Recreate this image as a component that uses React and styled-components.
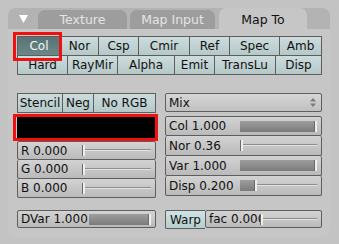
import React from 'react';
import styled, { createGlobalStyle } from 'styled-components';

const GlobalStyle = createGlobalStyle`
  body {
    margin: 0;
    background: #c3c3c3;
    font-family: "DejaVu Sans", "Liberation Sans", sans-serif;
  }
  * { box-sizing: border-box; }
`;

const Panel = styled.div`
  margin: 8px 0 0 8px;
  width: 322px;
  height: 229px;
  background: #c6c6c6;
  border-radius: 8px;
`;

const Header = styled.div`
  display: flex;
  align-items: flex-end;
  height: 21px;
  background: #b3b3b3;
  border-radius: 8px 8px 0 0;
`;

const Toggle = styled.div`
  align-self: stretch;
  width: 30px;
  display: flex;
  align-items: center;
  justify-content: center;
  padding-top: 1px;
`;

const Tab = styled.div`
  width: ${p => p.$w}px;
  height: ${p => (p.$active ? 21 : 19)}px;
  margin-right: ${p => p.$mr || 0}px;
  border-radius: 7px 7px 0 0;
  background: ${p => (p.$active ? '#c6c6c6' : '#9d9d9d')};
  color: ${p => (p.$active ? '#111' : '#e4e4e4')};
  font-size: 12.5px;
  display: flex;
  align-items: center;
  justify-content: center;
  padding-top: ${p => (p.$active ? 1 : 0)}px;
`;

const Body = styled.div`
  padding: 7px 0 0 9px;
`;

const Block = styled.div`
  display: flex;
  flex-direction: column;
  border-top: 1px solid #5e5e5e;
  border-left: 1px solid #5e5e5e;
  width: ${p => p.$w}px;
`;

const Row = styled.div`
  display: flex;
`;

const Btn = styled.div`
  position: relative;
  width: ${p => p.$w}px;
  height: 19px;
  border-right: 1px solid #5e5e5e;
  border-bottom: 1px solid #5e5e5e;
  background: ${p =>
    p.$on
      ? 'linear-gradient(#587373, #6b8787)'
      : 'linear-gradient(#cddcdc, #b5c8c8)'};
  color: ${p => (p.$on ? '#f4f4f4' : '#111')};
  font-size: 12px;
  display: flex;
  align-items: center;
  justify-content: center;
  white-space: nowrap;

  ${p =>
    p.$mark &&
    `&::after {
      content: '';
      position: absolute;
      top: -5px;
      left: -5px;
      right: -2px;
      bottom: -6px;
      border: 3px solid #f01010;
      z-index: 2;
    }`}
`;

const Columns = styled.div`
  display: grid;
  grid-template-columns: 139px 157px;
  column-gap: 9px;
  margin-top: ${p => p.$mt}px;
`;

const Col = styled.div`
  display: flex;
  flex-direction: column;
  margin-top: ${p => p.$mt || 0}px;
`;

const Swatch = styled.div`
  position: relative;
  height: 21px;
  margin: 4px 1px 3px 0;
  background: #000;

  &::after {
    content: '';
    position: absolute;
    top: -3px;
    left: -4px;
    right: -3px;
    bottom: -3px;
    border: 3px solid #f01010;
    z-index: 2;
  }
`;

const SliderBox = styled.div`
  display: flex;
  align-items: center;
  flex: ${p => (p.$grow ? 1 : 'none')};
  min-width: 0;
  height: ${p => p.$h || 19}px;
  border: 1px solid #5e5e5e;
  border-radius: 2px;
  background: linear-gradient(#d3d3d3, #bababa);
  padding-left: 3px;
  font-size: 12px;
  color: #111;

  & + & { border-top: none; }
`;

const SliderLabel = styled.div`
  flex: 0 0 ${p => p.$lw || 47}%;
  white-space: nowrap;
  overflow: hidden;
`;

const Track = styled.div`
  flex: 1;
  height: 11px;
  margin-right: 4px;
  display: flex;
  background: linear-gradient(
    to bottom,
    transparent 4px,
    #8e8e8e 4px,
    #8e8e8e 5px,
    #e2e2e2 5px,
    #e2e2e2 6px,
    transparent 6px
  );
`;

const Fill = styled.div`
  background: linear-gradient(#9d9d9d, #7b7b7b);
`;

const Handle = styled.div`
  flex: none;
  width: 3px;
  margin-left: -2px;
  border-left: 1px solid #6a6a6a;
  background: #eeeeee;
`;

const Select = styled.div`
  display: flex;
  align-items: center;
  justify-content: space-between;
  height: 19px;
  border: 1px solid #5e5e5e;
  border-radius: 2px;
  background: linear-gradient(#d6d6d6, #c0c0c0);
  padding: 0 5px 0 3px;
  font-size: 12px;
  color: #111;
`;

const BottomRow = styled.div`
  display: flex;
`;

const Warp = styled(Btn)`
  flex: none;
  border: 1px solid #5e5e5e;
  border-right: none;
  border-radius: 2px 0 0 2px;
  background: linear-gradient(#cfe3e3, #b6cece);
`;

function Slider({ label, value, h, grow, lw }) {
  return (
    <SliderBox $h={h} $grow={grow}>
      <SliderLabel $lw={lw}>{label}</SliderLabel>
      <Track>
        <Fill style={{ width: `${value * 100}%` }} />
        <Handle />
      </Track>
    </SliderBox>
  );
}

const row1 = [
  ['Col', 43], ['Nor', 38], ['Csp', 40], ['Cmir', 51], ['Ref', 40], ['Spec', 50], ['Amb', 42],
];
const row2 = [
  ['Hard', 50], ['RayMir', 50], ['Alpha', 57], ['Emit', 40], ['TransLu', 61], ['Disp', 46],
];

export default function App() {
  return (
    <>
      <GlobalStyle />
      <Panel>
        <Header>
          <Toggle>
            <svg width="9" height="8" viewBox="0 0 9 8">
              <polygon points="0,0 9,0 4.5,8" fill="#ffffff" />
            </svg>
          </Toggle>
          <Tab $w={89} $mr={3}>Texture</Tab>
          <Tab $w={85} $mr={4}>Map Input</Tab>
          <Tab $w={88} $active>Map To</Tab>
        </Header>
        <Body>
          <Block $w={305}>
            <Row>
              {row1.map(([t, w], i) => (
                <Btn key={t} $w={w} $on={i === 0} $mark={i === 0}>{t}</Btn>
              ))}
            </Row>
            <Row>
              {row2.map(([t, w]) => (
                <Btn key={t} $w={w}>{t}</Btn>
              ))}
            </Row>
          </Block>

          <Columns $mt={18}>
            <Col>
              <Block $w={139}>
                <Row>
                  <Btn $w={45}>Stencil</Btn>
                  <Btn $w={31}>Neg</Btn>
                  <Btn $w={62}>No RGB</Btn>
                </Row>
              </Block>
              <Swatch />
              <Col>
                <Slider label="R 0.000" value={0} />
                <Slider label="G 0.000" value={0} />
                <Slider label="B 0.000" value={0} />
              </Col>
            </Col>
            <Col>
              <Select>
                <span>Mix</span>
                <svg width="6" height="9" viewBox="0 0 6 9">
                  <polygon points="0,3.5 6,3.5 3,0" fill="#7c7c7c" />
                  <polygon points="0,5.5 6,5.5 3,9" fill="#7c7c7c" />
                </svg>
              </Select>
              <Col $mt={4}>
                <Slider label="Col 1.000" value={1} h={20} />
                <Slider label="Nor 0.36" value={0.0144} h={20} />
                <Slider label="Var 1.000" value={1} h={20} />
                <Slider label="Disp 0.200" value={0.2} h={20} />
              </Col>
            </Col>
          </Columns>

          <Columns $mt={12}>
            <Slider label="DVar 1.000" value={1} h={18} lw={51} />
            <BottomRow>
              <Warp $w={40}>Warp</Warp>
              <Slider label="fac 0.000" value={0} h={18} grow />
            </BottomRow>
          </Columns>
        </Body>
      </Panel>
    </>
  );
}
